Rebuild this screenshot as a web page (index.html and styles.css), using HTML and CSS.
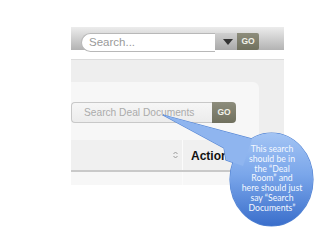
FILE: index.html
```html
<!DOCTYPE html>
<html lang="en">
<head>
    <meta charset="UTF-8">
    <title>Deal Documents</title>
    <link rel="stylesheet" href="styles.css">
</head>
<body>
    <div class="frame">
        <div class="topbar">
            <div class="tab"></div>
            <div class="global-search">
                <div class="pill">Search...</div>
                <div class="drop"><span class="arrow"></span></div>
                <div class="go">GO</div>
            </div>
        </div>

        <div class="panel">
            <div class="search-box">
                <div class="doc-input">Search Deal Documents</div>
                <div class="go doc-go">GO</div>
            </div>
            <div class="table-head">
                <div class="col first">
                    <svg class="sort" width="5" height="8" viewBox="0 0 5 8">
                        <path d="M0.5 3 L2.5 1 L4.5 3 M0.5 5 L2.5 7 L4.5 5" fill="none" stroke="#999" stroke-width="1"/>
                    </svg>
                </div>
                <div class="col actions">Actions</div>
            </div>
            <div class="table-row">
                <div class="col first"></div>
                <div class="col"></div>
            </div>
        </div>
    </div>

    <!-- annotation callout -->
    <svg class="callout" width="320" height="240" viewBox="0 0 320 240">
        <defs>
            <linearGradient id="bubble" x1="0" y1="0" x2="0" y2="1">
                <stop offset="0" stop-color="#a3c4f4"/>
                <stop offset="0.45" stop-color="#7aa6ea"/>
                <stop offset="1" stop-color="#3a6ecb"/>
            </linearGradient>
        </defs>
        <ellipse cx="271.5" cy="179.5" rx="41.5" ry="46.5" fill="none" stroke="#5686d4" stroke-width="1.2"/>
        <polygon points="163,115 252,139 243,166 226,160 224,148" fill="none" stroke="#5686d4" stroke-width="1.2"/>
        <ellipse cx="271.5" cy="179.5" rx="41.5" ry="46.5" fill="url(#bubble)"/>
        <polygon points="163,115 252,139 243,166 226,160 224,148" fill="#8fb5ef"/>
    </svg>
    <div class="note">This search<br>should be in<br>the “Deal<br>Room” and<br>here should just<br>say “Search<br>Documents”</div>
</body>
</html>
```

FILE: styles.css
```css
body {
    margin: 0;
    background-color: white;
    font-family: "Liberation Sans", Arial, sans-serif;
}
.frame {
    margin: 27px 0 0 71px;
    width: 213px;
}
.topbar {
    height: 23px;
    background: linear-gradient(#ececec, #b3b3b3);
    display: flex;
    flex-direction: column;
}
.tab {
    width: 28px;
    height: 2px;
    margin-left: 26px;
    background-color: #fafafa;
    border-radius: 0 0 3px 3px;
}
.global-search {
    display: flex;
    margin: 6px 0 0 10px;
}
.pill {
    width: 126px;
    height: 17px;
    background-color: white;
    border: 1px solid #b8b8b8;
    border-right: none;
    border-radius: 10px 0 0 10px;
    color: #9a9a9a;
    font-size: 11.5px;
    line-height: 17px;
    padding-left: 7px;
}
.drop {
    width: 22px;
    height: 17px;
    background: linear-gradient(#d0d0d0, #a9a9a9);
    display: flex;
    justify-content: center;
    align-items: center;
}
.arrow {
    width: 0;
    height: 0;
    border-left: 5px solid transparent;
    border-right: 5px solid transparent;
    border-top: 6px solid #333;
    margin-left: 4px;
}
.go {
    width: 22px;
    height: 17px;
    background: linear-gradient(#8d8d7c, #70705e);
    color: #f2f2ea;
    font-size: 8.5px;
    font-weight: bold;
    line-height: 17px;
    text-align: center;
    border-radius: 0 2px 2px 0;
}
.panel {
    margin-top: 9px;
    border-top: 1px solid #dcdcdc;
    padding-top: 22px;
    background-color: #eeeeee;
}
.search-box {
    width: 188px;
    background-color: #f7f7f7;
    border-radius: 0 6px 0 0;
    padding: 20px 0 17px 0;
    display: flex;
}
.doc-input {
    width: 128px;
    height: 19px;
    padding-left: 12px;
    background: linear-gradient(#f6f6f6, #ececec);
    border: 1px solid #c8c8c8;
    border-right: none;
    border-radius: 4px 0 0 4px;
    color: #ababab;
    font-size: 10.2px;
    line-height: 19px;
}
.doc-go {
    width: 24px;
    height: 21px;
    line-height: 21px;
    border-radius: 0 4px 4px 0;
}
.table-head {
    display: flex;
    height: 30px;
    background-color: #f0f0f0;
    border-bottom: 2px solid #c9c9c9;
}
.table-row {
    display: flex;
    height: 13px;
    background-color: #f7f7f7;
}
.col.first {
    width: 111px;
    border-right: 1px solid #fbfbfb;
    display: flex;
    justify-content: flex-end;
    align-items: center;
}
.sort {
    margin-right: 4px;
}
.actions {
    white-space: nowrap;
    padding-left: 8px;
    font-size: 12px;
    font-weight: bold;
    color: #111;
    line-height: 30px;
    padding-top: 1px;
}
.callout {
    position: absolute;
    left: 0;
    top: 0;
}
.note {
    position: absolute;
    left: 229px;
    top: 144px;
    width: 86px;
    text-align: center;
    font-family: Lato, "Open Sans", sans-serif;
    font-size: 8.7px;
    line-height: 9.8px;
    color: #f4f8ff;
}
```
